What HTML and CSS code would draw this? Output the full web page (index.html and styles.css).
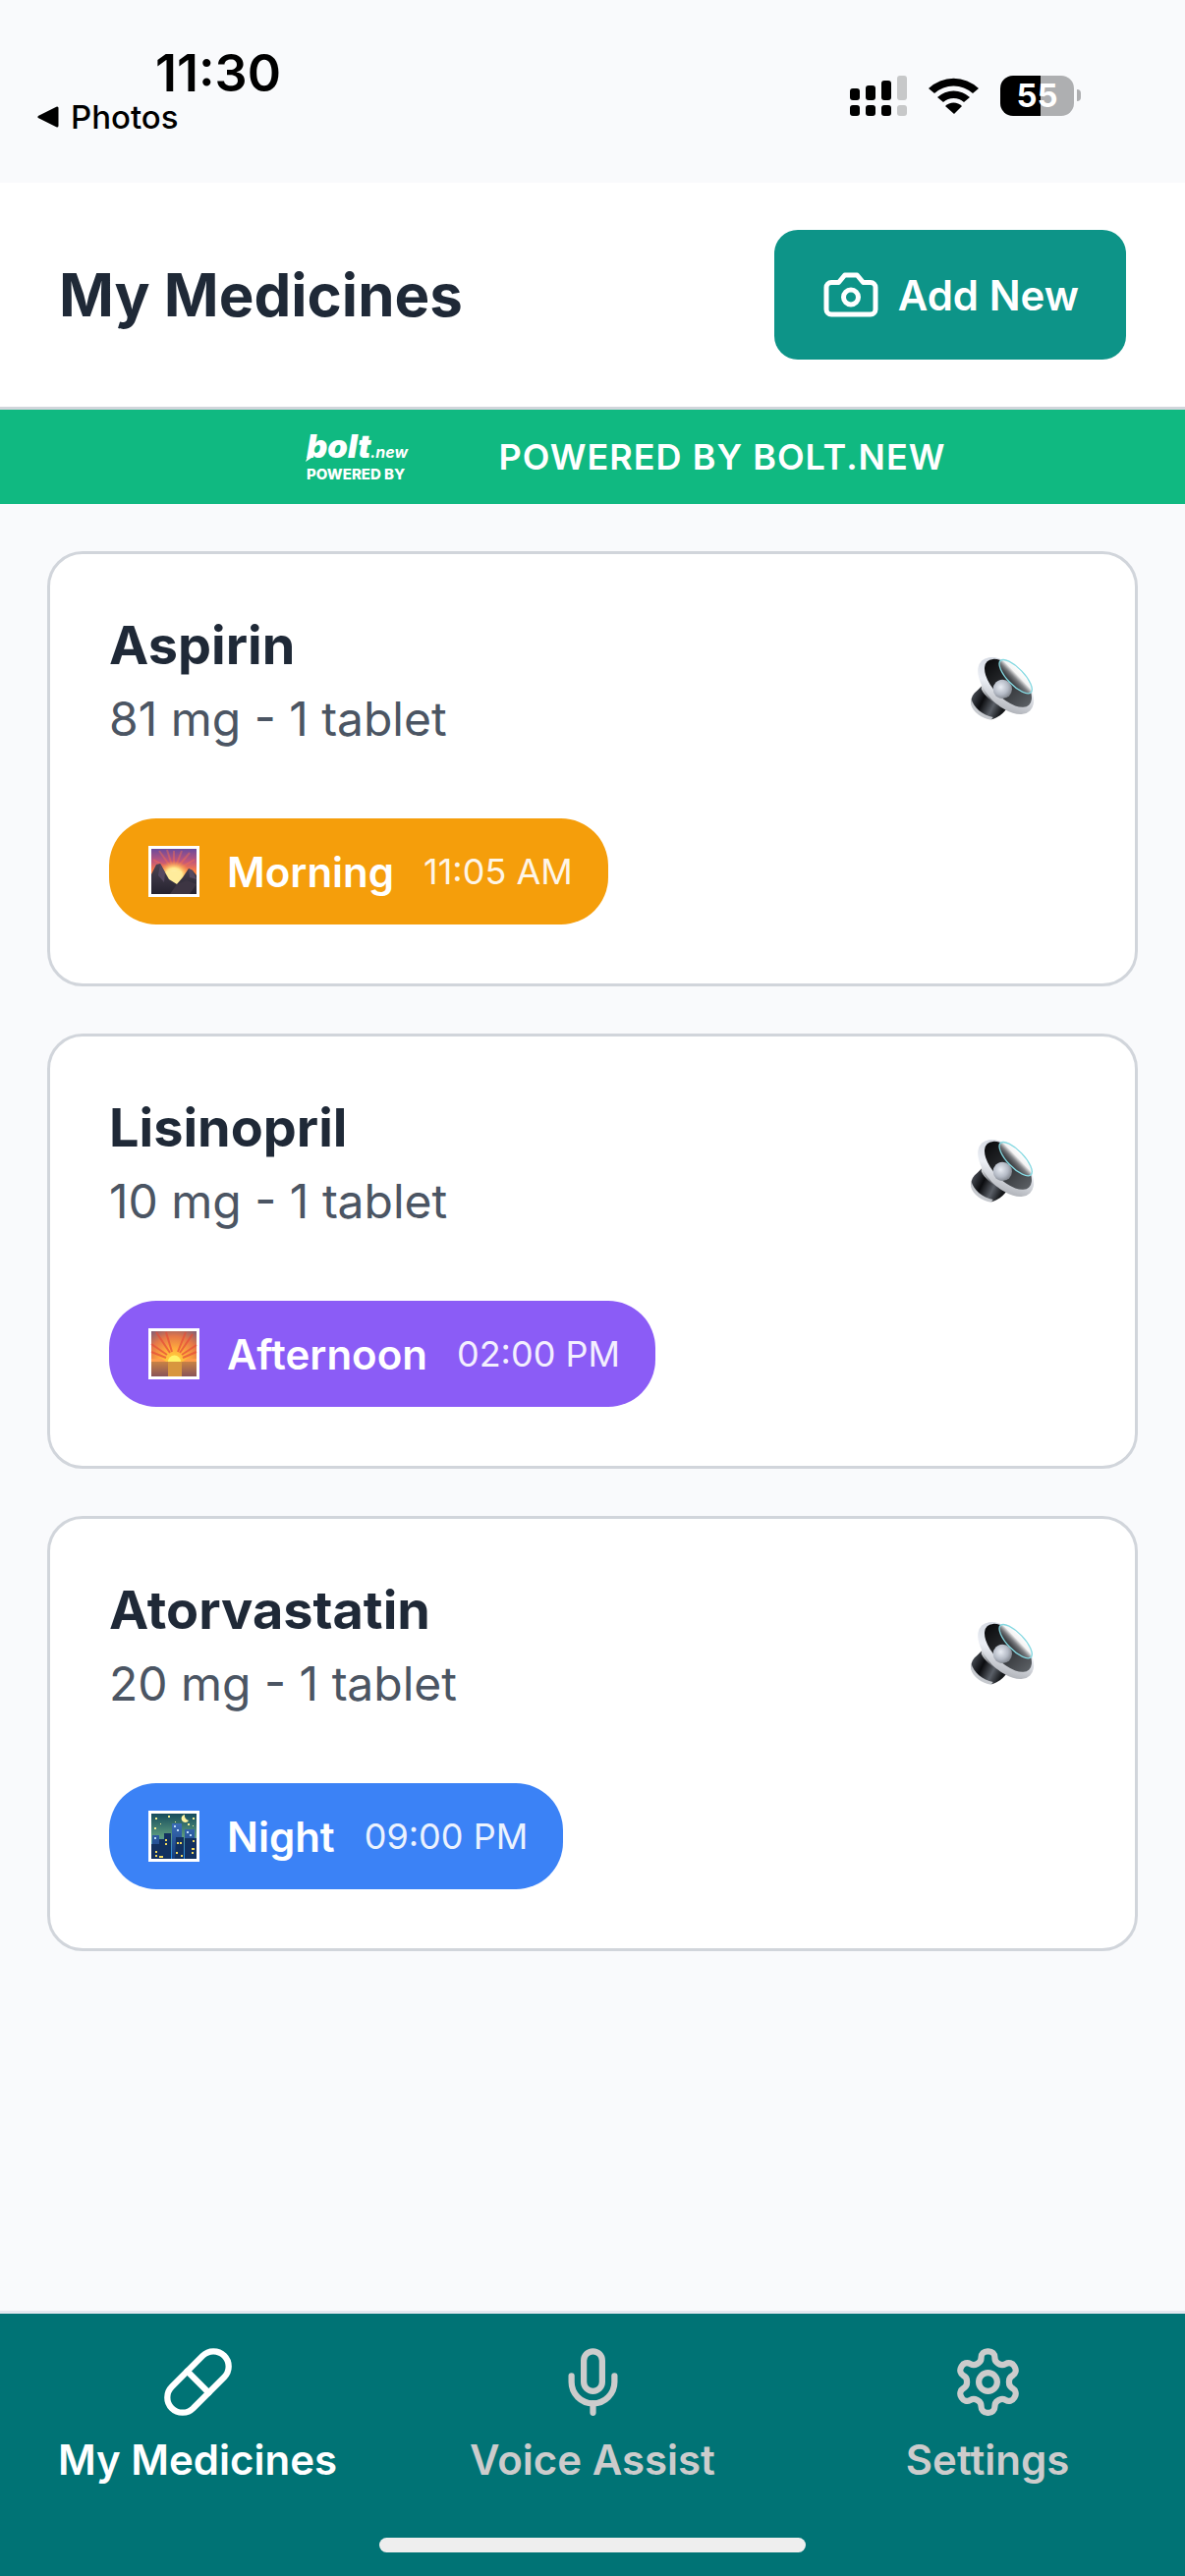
FILE: index.html
```html
<!DOCTYPE html>
<html lang="en">
	<head>
		<meta charset="utf-8">
		<meta name="viewport" content="width=device-width, initial-scale=1">
		<title>My Medicines</title>
		<link rel="stylesheet" href="styles.css">
	</head>
	<body>
		<!-- shared pictures -->
		<svg class="defs" width="0" height="0" aria-hidden="true">
			<defs>
				<linearGradient id="rim" x1="0" y1="0" x2="1" y2="1">
					<stop offset="0" stop-color="#c9ced8"/>
					<stop offset="0.5" stop-color="#eceff5"/>
					<stop offset="1" stop-color="#9a9da3"/>
				</linearGradient>
				<linearGradient id="cone" x1="0" y1="0" x2="1" y2="0">
					<stop offset="0" stop-color="#0a0b0d"/>
					<stop offset="0.4" stop-color="#26282b"/>
					<stop offset="1" stop-color="#5b5f64"/>
				</linearGradient>
				<linearGradient id="magnet" x1="0" y1="0" x2="1" y2="0.5">
					<stop offset="0" stop-color="#9a9ea4"/>
					<stop offset="0.2" stop-color="#3b3f46"/>
					<stop offset="0.45" stop-color="#0b0c0f"/>
					<stop offset="0.75" stop-color="#5a5f67"/>
					<stop offset="1" stop-color="#15171a"/>
				</linearGradient>
				<linearGradient id="neck" x1="0" y1="0" x2="1" y2="0.4">
					<stop offset="0" stop-color="#f0f2f5"/>
					<stop offset="0.5" stop-color="#6c6f75"/>
					<stop offset="1" stop-color="#b9bcc1"/>
				</linearGradient>
				<radialGradient id="dome" cx="0.4" cy="0.4" r="0.65">
					<stop offset="0" stop-color="#e9edf4"/>
					<stop offset="0.6" stop-color="#b4bac5"/>
					<stop offset="1" stop-color="#7d828a"/>
				</radialGradient>
				<linearGradient id="glass" x1="0" y1="0" x2="0" y2="1">
					<stop offset="0" stop-color="#fff"/>
					<stop offset="0.35" stop-color="#f4f4f4"/>
					<stop offset="0.6" stop-color="#8e9094" stop-opacity="0.8"/>
					<stop offset="1" stop-color="#44474b" stop-opacity="0.3"/>
				</linearGradient>
				<linearGradient id="dawn" x1="0" y1="0" x2="0" y2="1">
					<stop offset="0" stop-color="#6a4a9c"/>
					<stop offset="0.28" stop-color="#c0567c"/>
					<stop offset="0.5" stop-color="#ff8140"/>
					<stop offset="1" stop-color="#ffc060"/>
				</linearGradient>
				<radialGradient id="dawn-sun">
					<stop offset="0" stop-color="#fff7c4"/>
					<stop offset="0.5" stop-color="#ffe88e"/>
					<stop offset="1" stop-color="#ffa43c" stop-opacity="0"/>
				</radialGradient>
				<linearGradient id="rock" x1="0" y1="0" x2="0" y2="1">
					<stop offset="0" stop-color="#4c4453"/>
					<stop offset="1" stop-color="#25222f"/>
				</linearGradient>
				<radialGradient id="dusk" cx="0.5" cy="0.7" r="0.9">
					<stop offset="0" stop-color="#ffe23c"/>
					<stop offset="0.35" stop-color="#ffac3c"/>
					<stop offset="0.65" stop-color="#e67848"/>
					<stop offset="1" stop-color="#70587c"/>
				</radialGradient>
				<linearGradient id="sea" x1="0" y1="0" x2="0" y2="1">
					<stop offset="0" stop-color="#c88244"/>
					<stop offset="1" stop-color="#8a5458"/>
				</linearGradient>
				<linearGradient id="night-sky" x1="0" y1="0" x2="0" y2="1">
					<stop offset="0" stop-color="#154b5c"/>
					<stop offset="0.5" stop-color="#5b9a7e"/>
					<stop offset="0.75" stop-color="#3d8fc0"/>
					<stop offset="1" stop-color="#1e8cf0"/>
				</linearGradient>
				<linearGradient id="tower" x1="0" y1="0" x2="0" y2="1">
					<stop offset="0" stop-color="#3a6cb4"/>
					<stop offset="1" stop-color="#153d7c"/>
				</linearGradient>
			</defs>

			<symbol id="speaker" viewBox="75 75 210 210">
				<path d="M104 188C88 200 82 216 86 230 98 254 122 272 148 277 166 272 182 260 192 246L190 228 122 170Z" fill="url(#magnet)"/>
				<path d="M85 212C92 240 120 264 152 270L146 278C118 274 90 254 84 230Z" fill="#c6c9ce"/>
				<path d="M118 158 116 184C128 210 158 232 190 236L206 240 150 160Z" fill="url(#neck)"/>
				<path d="M126 180C138 204 164 224 200 234L194 226 140 176Z" fill="#5b5e62"/>
				<ellipse cx="191" cy="174" rx="106" ry="60" transform="rotate(46 191 174)" fill="url(#rim)"/>
				<ellipse cx="198" cy="166" rx="92" ry="46" transform="rotate(46 198 166)" fill="url(#cone)"/>
				<circle cx="181" cy="184" r="29" fill="url(#dome)"/>
				<ellipse cx="221" cy="146" rx="67" ry="25" transform="rotate(46 221 146)" fill="url(#glass)" stroke="#86d9e2" stroke-width="4"/>
			</symbol>

			<symbol id="sunrise" viewBox="0 0 60 60">
				<rect x="4" y="4" width="52" height="52" fill="#fff"/>
				<rect x="7" y="7" width="46" height="46" fill="url(#dawn)"/>
				<g stroke="#ff7248" stroke-width="2" opacity="0.4">
					<path d="M30 30 15 9M30 30 23 8M30 30 30 9M30 30 38 9M30 30 46 11M30 30 51 18M30 30 9 18"/>
				</g>
				<ellipse cx="30" cy="34" rx="17" ry="15" fill="url(#dawn-sun)"/>
				<path d="M22 30H38L36 44H26Z" fill="#ffec9c"/>
				<path d="M7 33 12 23 16 22 21 31 25 38 33 43 39 36 45 27 49 29 53 34V53H7Z" fill="url(#rock)"/>
				<path d="M16 22 21 31 20 41 14 34ZM45 27 49 29 53 38 46 36Z" fill="#554960"/>
				<path d="M33 43 26 53H46L53 43 43 39Z" fill="#3d3543"/>
			</symbol>

			<symbol id="sunset" viewBox="0 0 60 60">
				<rect x="4" y="4" width="52" height="52" fill="#fff"/>
				<rect x="7" y="7" width="46" height="46" fill="url(#dusk)"/>
				<g stroke="#e64c38" stroke-width="2" opacity="0.7">
					<path d="M26 29 12 8M28 28 22 8M34 28 42 8M36 29 49 10M38 31 53 21M23 31 7 20M22 34 7 28M39 34 53 28"/>
				</g>
				<rect x="7" y="38" width="46" height="15" fill="url(#sea)"/>
				<rect x="24" y="38" width="14" height="15" fill="#d8963e"/>
				<path d="M24 38A6 6 0 0 1 37 38Z" fill="#fff36a"/>
				<path d="M7 35H17L22 38H7ZM53 35H44L39 38H53Z" fill="#ff9c4c"/>
			</symbol>

			<symbol id="night" viewBox="0 0 60 60">
				<rect x="4" y="4" width="52" height="52" fill="#fff"/>
				<rect x="7" y="7" width="46" height="46" fill="url(#night-sky)"/>
				<path d="M41 8A4 4 0 1 0 45 14 5 5 0 0 1 41 8Z" fill="#fff3a0"/>
				<g fill="#f3ee92">
					<rect x="11" y="11" width="2" height="2"/>
					<rect x="16" y="17" width="1" height="1"/>
					<rect x="24" y="9" width="2" height="2"/>
					<rect x="10" y="21" width="2" height="2"/>
					<rect x="31" y="15" width="1" height="1"/>
					<rect x="44" y="17" width="2" height="2"/>
					<rect x="49" y="11" width="2" height="2"/>
					<rect x="49" y="19" width="1" height="1"/>
				</g>
				<path d="M28 17H38V53H28ZM41 23H51V53H41ZM8 29H15V53H8Z" fill="url(#tower)"/>
				<path d="M20 27H27V53H20ZM32 31H40V53H31ZM41 32H53V53H41ZM7 38H17V53H7ZM15 33H20V53H15Z" fill="#12315f"/>
				<path d="M21 33h2v2h-2zM21 37h2v2h-2zM11 45h2v2h-2zM11 49h2v2h-2zM15 50h4v2h-4zM33 36h2v2h-2zM36 36h2v2h-2zM49 34h2v2h-2zM48 42h3v2h-3zM48 46h2v2h-2zM32 46h2v2h-2zM37 49h2v2h-2z" fill="#f2d95c"/>
				<path d="M30 19h2v2h-2zM33 23h2v2h-2zM43 25h2v2h-2zM46 28h2v2h-2zM10 31h2v2h-2z" fill="#bcdcf8"/>
			</symbol>
		</svg>

		<div class="status-bar">
			<div class="status-left">
				<div class="clock">11:30</div>
				<a class="back-link" href="#photos">
					<svg width="22" height="22" viewBox="0 0 22 22"><path d="M2 11 20 2V20Z" fill="#000" stroke="#000" stroke-width="3" stroke-linejoin="round"/></svg>
					Photos
				</a>
			</div>
			<div class="status-icons">
				<svg width="58" height="41" viewBox="0 0 58 41">
					<g fill="#000">
						<rect x="0" y="13" width="10" height="12" rx="3"/>
						<rect x="16" y="10" width="10" height="15" rx="3"/>
						<rect x="32" y="5" width="10" height="20" rx="3"/>
						<rect x="0" y="30" width="10" height="11" rx="3"/>
						<rect x="16" y="30" width="10" height="11" rx="3"/>
						<rect x="32" y="30" width="10" height="11" rx="3"/>
					</g>
					<g fill="#c7c8c9">
						<rect x="48" y="0" width="10" height="25" rx="3"/>
						<rect x="48" y="30" width="10" height="11" rx="3"/>
					</g>
				</svg>
				<svg width="51" height="41" viewBox="0 0 51 41">
					<path d="M0 13A37 37 0 0 1 51 13L45 18A29 29 0 0 0 6 18Z"/>
					<path d="M9 22A24 24 0 0 1 42 22L36 27A16 16 0 0 0 15 27Z"/>
					<path d="M17 31A12 12 0 0 1 34 31L26 39Z"/>
				</svg>
				<div class="battery">
					<span class="battery-level">55</span>
				</div>
			</div>
		</div>

		<header class="header">
			<h1>My Medicines</h1>
			<button type="button" class="add-button">
				<svg class="icon" width="60" height="60" viewBox="0 0 24 24">
					<path d="M14.5 4h-5L7 7H4a2 2 0 0 0-2 2v9a2 2 0 0 0 2 2h16a2 2 0 0 0 2-2V9a2 2 0 0 0-2-2h-3l-2.5-3z"/>
					<circle cx="12" cy="13" r="3"/>
				</svg>
				Add New
			</button>
		</header>

		<div class="banner">
			<div class="banner-logo">
				<svg width="112" height="64" viewBox="0 0 112 64" fill="#fff">
					<path d="M7 26 3 37 12 31Z"/>
					<text class="logo-bolt" x="4" y="33">bolt</text>
					<text class="logo-new" x="69" y="33">.new</text>
					<text class="logo-powered" x="4" y="55">POWERED BY</text>
				</svg>
			</div>
			<span class="banner-text">POWERED BY BOLT.NEW</span>
		</div>

		<main class="medicines">
			<article class="card">
				<div class="card-top">
					<div>
						<h2>Aspirin</h2>
						<p class="dose">81 mg - 1 tablet</p>
					</div>
					<button type="button" class="speak-button" aria-label="Read Aspirin aloud">
						<svg width="70" height="70"><use href="#speaker"/></svg>
					</button>
				</div>
				<div class="time-pill morning">
					<svg width="60" height="60"><use href="#sunrise"/></svg>
					<span class="period">Morning</span>
					<time datetime="11:05">11:05 AM</time>
				</div>
			</article>

			<article class="card">
				<div class="card-top">
					<div>
						<h2>Lisinopril</h2>
						<p class="dose">10 mg - 1 tablet</p>
					</div>
					<button type="button" class="speak-button" aria-label="Read Lisinopril aloud">
						<svg width="70" height="70"><use href="#speaker"/></svg>
					</button>
				</div>
				<div class="time-pill afternoon">
					<svg width="60" height="60"><use href="#sunset"/></svg>
					<span class="period">Afternoon</span>
					<time datetime="14:00">02:00 PM</time>
				</div>
			</article>

			<article class="card">
				<div class="card-top">
					<div>
						<h2>Atorvastatin</h2>
						<p class="dose">20 mg - 1 tablet</p>
					</div>
					<button type="button" class="speak-button" aria-label="Read Atorvastatin aloud">
						<svg width="70" height="70"><use href="#speaker"/></svg>
					</button>
				</div>
				<div class="time-pill night">
					<svg width="60" height="60"><use href="#night"/></svg>
					<span class="period">Night</span>
					<time datetime="21:00">09:00 PM</time>
				</div>
			</article>
		</main>

		<footer class="footer">
			<nav class="tabs">
				<a class="tab active" href="#medicines">
					<svg class="icon" width="75" height="75" viewBox="0 0 24 24">
						<path d="m10.5 20.5 10-10a4.95 4.95 0 1 0-7-7l-10 10a4.95 4.95 0 1 0 7 7Z"/>
						<path d="m8.5 8.5 7 7"/>
					</svg>
					My Medicines
				</a>
				<a class="tab" href="#voice">
					<svg class="icon" width="75" height="75" viewBox="0 0 24 24">
						<path d="M12 2a3 3 0 0 0-3 3v7a3 3 0 0 0 6 0V5a3 3 0 0 0-3-3Z"/>
						<path d="M19 10v2a7 7 0 0 1-14 0v-2"/>
						<path d="M12 19v3"/>
					</svg>
					Voice Assist
				</a>
				<a class="tab" href="#settings">
					<svg class="icon" width="75" height="75" viewBox="0 0 24 24">
						<path d="M12.22 2h-.44a2 2 0 0 0-2 2v.18a2 2 0 0 1-1 1.73l-.43.25a2 2 0 0 1-2 0l-.15-.08a2 2 0 0 0-2.73.73l-.22.38a2 2 0 0 0 .73 2.73l.15.1a2 2 0 0 1 1 1.72v.51a2 2 0 0 1-1 1.74l-.15.09a2 2 0 0 0-.73 2.73l.22.38a2 2 0 0 0 2.73.73l.15-.08a2 2 0 0 1 2 0l.43.25a2 2 0 0 1 1 1.73V20a2 2 0 0 0 2 2h.44a2 2 0 0 0 2-2v-.18a2 2 0 0 1 1-1.73l.43-.25a2 2 0 0 1 2 0l.15.08a2 2 0 0 0 2.73-.73l.22-.39a2 2 0 0 0-.73-2.73l-.15-.08a2 2 0 0 1-1-1.74v-.5a2 2 0 0 1 1-1.74l.15-.09a2 2 0 0 0 .73-2.73l-.22-.38a2 2 0 0 0-2.73-.73l-.15.08a2 2 0 0 1-2 0l-.43-.25a2 2 0 0 1-1-1.73V4a2 2 0 0 0-2-2z"/>
						<circle cx="12" cy="12" r="3"/>
					</svg>
					Settings
				</a>
			</nav>
			<div class="home-indicator"></div>
		</footer>
	</body>
</html>
```

FILE: styles.css
```css
* {
	box-sizing: border-box;
}

body {
	display: flex;
	flex-direction: column;
	min-height: 100vh;
	margin: 0;
	background-color: #f9fafc;
	color: #1f2937;
	font-family: Inter, "Liberation Sans", sans-serif;
}

h1, h2, p {
	margin: 0;
}

button {
	border: 0;
	font-family: inherit;
	cursor: pointer;
}

a {
	text-decoration: none;
}

svg {
	display: block;
	flex-shrink: 0;
}

.defs {
	position: absolute;
}

.icon {
	fill: none;
	stroke: currentColor;
	stroke-width: 2;
	stroke-linecap: round;
	stroke-linejoin: round;
}

/* status bar */
.status-bar {
	display: flex;
	justify-content: space-between;
	padding: 44px 106px 54px 38px;
	color: #000;
}

.clock {
	padding-left: 120px;
	font-size: 52px;
	font-weight: 600;
	line-height: 62px;
}

.back-link {
	display: flex;
	align-items: center;
	gap: 12px;
	color: #000;
	font-size: 33px;
	font-weight: 500;
	line-height: 26px;
}

.status-icons {
	display: flex;
	align-items: flex-start;
	gap: 22px;
	padding-top: 33px;
}

.battery {
	position: relative;
	width: 75px;
	height: 41px;
	margin-right: 7px;
	border-radius: 13px;
	background: linear-gradient(to right, #000 55%, #aeafb1 55%);
	color: #fff;
	font-size: 33px;
	font-weight: 700;
	line-height: 41px;
	text-align: center;
}
.battery:after {
	content: "";
	position: absolute;
	right: -7px;
	top: 14px;
	width: 4px;
	height: 12px;
	border-radius: 0 4px 4px 0;
	background-color: #aeafb1;
}

/* header */
.header {
	display: flex;
	align-items: center;
	justify-content: space-between;
	padding: 48px 60px;
	border-bottom: 3px solid #d1d5db;
	background-color: #fff;
}
.header h1 {
	font-size: 60px;
	font-weight: 700;
	line-height: 72px;
}

.add-button {
	display: flex;
	align-items: center;
	gap: 18px;
	height: 132px;
	padding: 0 48px;
	border-radius: 24px;
	background-color: #0d9488;
	color: #fff;
	font-size: 42px;
	font-weight: 600;
}

.banner {
	display: flex;
	align-items: center;
	justify-content: center;
	gap: 24px;
	height: 96px;
	background-color: #10b981;
	color: #fff;
}

.banner-logo {
	display: flex;
	justify-content: center;
	width: 240px;
}

.logo-bolt {
	font-size: 33px;
	font-style: italic;
	font-weight: 900;
}

.logo-new {
	font-size: 16px;
	font-style: italic;
	font-weight: 700;
}

.logo-powered {
	font-size: 15px;
	font-weight: 800;
}

.banner-text {
	font-size: 36px;
	font-weight: 600;
	letter-spacing: 1px;
}

/* medicine cards */
.medicines {
	display: flex;
	flex: 1;
	flex-direction: column;
	gap: 48px;
	padding: 48px;
}

.card {
	display: flex;
	flex-direction: column;
	align-items: flex-start;
	gap: 57px;
	padding: 60px;
	border: 3px solid #d1d5db;
	border-radius: 36px;
	background-color: #fff;
}
.card h2 {
	margin-bottom: 12px;
	font-size: 54px;
	font-weight: 700;
	line-height: 66px;
}

.card-top {
	display: flex;
	justify-content: space-between;
	width: 100%;
}

.dose {
	color: #4b5563;
	font-size: 48px;
	font-kerning: none;
	line-height: 60px;
}

.speak-button {
	display: flex;
	align-items: center;
	justify-content: center;
	width: 150px;
	height: 152px;
	padding: 0;
	background: none;
}

.time-pill {
	display: flex;
	align-items: center;
	height: 108px;
	padding: 0 36px;
	border-radius: 48px;
	color: #fff;
}
.time-pill .period {
	margin: 0 30px 0 24px;
	font-size: 42px;
	font-weight: 600;
}
.time-pill time {
	font-size: 36px;
	opacity: 0.9;
}
.time-pill.morning {
	background-color: #f59e0b;
}
.time-pill.afternoon {
	background-color: #8b5cf6;
}
.time-pill.night {
	background-color: #3b82f6;
}

/* bottom tabs */
.footer {
	padding: 32px 0 24px;
	border-top: 3px solid #e2e8f0;
	background-color: #007375;
}

.tabs {
	display: grid;
	grid-template-columns: repeat(3, 1fr);
}

.tab {
	display: flex;
	flex-direction: column;
	align-items: center;
	gap: 17px;
	color: #ccc;
	font-size: 42px;
	font-weight: 600;
	line-height: 50px;
}
.tab.active {
	color: #fff;
}

.home-indicator {
	width: 36%;
	height: 15px;
	margin: 54px auto 0;
	border-radius: 8px;
	background-color: #eee;
}
```
